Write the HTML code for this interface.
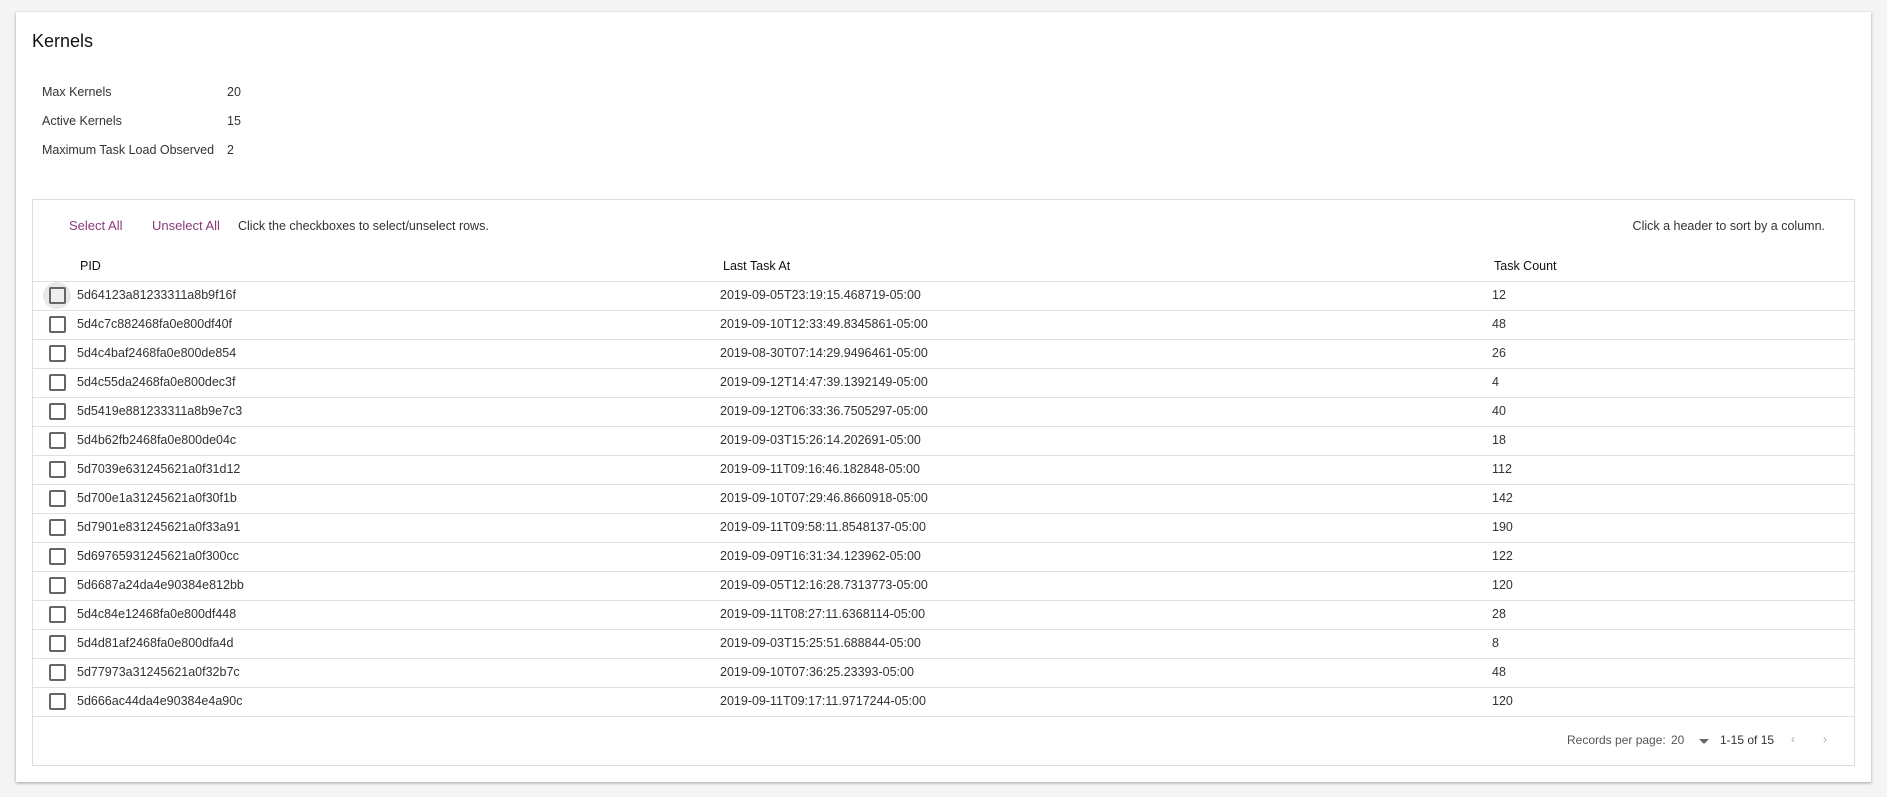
<!DOCTYPE html>
<html><head><style>
body{margin:0;width:1887px;height:797px;background:#f4f4f4;font-family:"Liberation Sans",sans-serif;color:#333;position:relative;overflow:hidden}
.card{position:absolute;left:16px;top:12px;width:1855px;height:770px;background:#fff;box-shadow:0 1px 3px rgba(0,0,0,.35)}
.a{position:absolute;white-space:nowrap;font-size:12.5px;line-height:16px}
.tbl{position:absolute;left:32px;top:199px;width:1821px;height:565px;border:1px solid #ddd}
.line{position:absolute;left:33px;width:1821px;height:1px;background:#e0e0e0}
.cb{position:absolute;left:49px;width:17px;height:17px;border:2px solid #666;border-radius:2px;box-sizing:border-box}
</style></head><body>
<div class="card"></div>
<div class="a" style="left:32px;top:30px;font-size:18px;line-height:22px;color:#111">Kernels</div>
<div class="a" style="left:42px;top:84px">Max Kernels</div><div class="a" style="left:227px;top:84px">20</div>
<div class="a" style="left:42px;top:113px">Active Kernels</div><div class="a" style="left:227px;top:113px">15</div>
<div class="a" style="left:42px;top:142px">Maximum Task Load Observed</div><div class="a" style="left:227px;top:142px">2</div>
<div class="tbl"></div>
<div class="a" style="left:69px;top:218px;color:#8a3a7a;font-size:13px">Select All</div>
<div class="a" style="left:152px;top:218px;color:#8a3a7a;font-size:13px">Unselect All</div>
<div class="a" style="left:238px;top:218px">Click the checkboxes to select/unselect rows.</div>
<div class="a" style="right:62px;top:218px">Click a header to sort by a column.</div>
<div class="a" style="left:80px;top:258px;color:#111">PID</div>
<div class="a" style="left:723px;top:258px;color:#111">Last Task At</div>
<div class="a" style="left:1494px;top:258px;color:#111">Task Count</div>
<div class="line" style="top:281px"></div>
<div id="rows"></div>
<div style="position:absolute;left:43px;top:282px;width:28px;height:27px;border-radius:50%;background:#e8e8e8"></div>
<div class="a" style="left:1567px;top:732px;font-size:12px;color:#555">Records per page:</div>
<div class="a" style="left:1671px;top:732px;font-size:12px;color:#555">20</div>
<div style="position:absolute;left:1699px;top:739px;border-left:5px solid transparent;border-right:5px solid transparent;border-top:5px solid #666"></div>
<div class="a" style="left:1720px;top:732px;font-size:12px;color:#333">1-15 of 15</div>
<div class="a" style="left:1791px;top:731px;font-size:12px;color:#aaa">&lsaquo;</div>
<div class="a" style="left:1823px;top:731px;font-size:12px;color:#aaa">&rsaquo;</div>
<script>
var d=[["5d64123a81233311a8b9f16f","2019-09-05T23:19:15.468719-05:00","12"],["5d4c7c882468fa0e800df40f","2019-09-10T12:33:49.8345861-05:00","48"],["5d4c4baf2468fa0e800de854","2019-08-30T07:14:29.9496461-05:00","26"],["5d4c55da2468fa0e800dec3f","2019-09-12T14:47:39.1392149-05:00","4"],["5d5419e881233311a8b9e7c3","2019-09-12T06:33:36.7505297-05:00","40"],["5d4b62fb2468fa0e800de04c","2019-09-03T15:26:14.202691-05:00","18"],["5d7039e631245621a0f31d12","2019-09-11T09:16:46.182848-05:00","112"],["5d700e1a31245621a0f30f1b","2019-09-10T07:29:46.8660918-05:00","142"],["5d7901e831245621a0f33a91","2019-09-11T09:58:11.8548137-05:00","190"],["5d69765931245621a0f300cc","2019-09-09T16:31:34.123962-05:00","122"],["5d6687a24da4e90384e812bb","2019-09-05T12:16:28.7313773-05:00","120"],["5d4c84e12468fa0e800df448","2019-09-11T08:27:11.6368114-05:00","28"],["5d4d81af2468fa0e800dfa4d","2019-09-03T15:25:51.688844-05:00","8"],["5d77973a31245621a0f32b7c","2019-09-10T07:36:25.23393-05:00","48"],["5d666ac44da4e90384e4a90c","2019-09-11T09:17:11.9717244-05:00","120"]];
var h="";d.forEach(function(r,i){var y=281+i*29;
h+='<div class="cb" style="top:'+(y+6)+'px;'+(i==0?'z-index:2;background:#eee':'')+'"></div>';
h+='<div class="a" style="left:77px;top:'+(y+6)+'px;z-index:3">'+r[0]+'</div><div class="a" style="left:720px;top:'+(y+6)+'px">'+r[1]+'</div><div class="a" style="left:1492px;top:'+(y+6)+'px">'+r[2]+'</div><div class="line" style="top:'+(y+29)+'px"></div>';});
document.getElementById("rows").innerHTML=h;
</script>
</body></html>
